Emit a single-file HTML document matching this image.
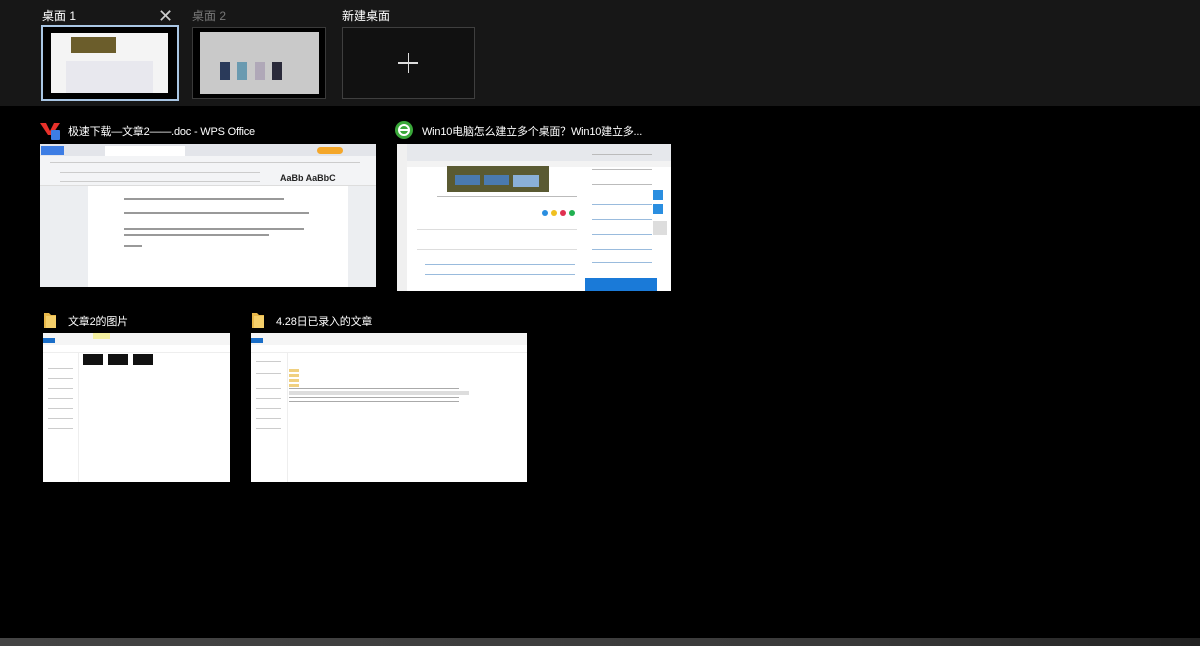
<!DOCTYPE html>
<html><head><meta charset="utf-8"><style>
*{margin:0;padding:0;box-sizing:border-box}
body{width:1200px;height:646px;background:#000;position:relative;overflow:hidden;font-family:"Liberation Sans","Noto Sans CJK SC",sans-serif;color:#fff}
.top{position:absolute;left:0;top:0;width:1200px;height:106px;background:#171717}
.abs{position:absolute}
.lbl{font-size:12px;position:absolute}
.t{font-size:11px;position:absolute;white-space:nowrap;letter-spacing:-0.2px}
.line{position:absolute;height:2px;background:#bbb}
.g{position:absolute;height:1px;background:#bbb}
</style></head><body>
<div class="top"></div>
<div class="lbl" style="left:42px;top:7px">桌面 1</div>
<div class="abs" style="left:158px;top:6px;font-size:18px;color:#ccc">✕</div>
<div class="lbl" style="left:192px;top:7px;color:#777">桌面 2</div>
<div class="lbl" style="left:342px;top:7px">新建桌面</div>
<div class="abs" style="left:41px;top:25px;width:138px;height:76px;border:2px solid #a9c6e4;background:#000">
 <div class="abs" style="left:8px;top:6px;width:117px;height:60px;background:#f4f4f4">
  <div class="abs" style="left:20px;top:4px;width:45px;height:16px;background:#6b5d2b"></div>
  <div class="abs" style="left:15px;top:28px;width:87px;height:32px;background:#e8e8ee"></div>
 </div></div>
<div class="abs" style="left:192px;top:27px;width:134px;height:72px;border:1px solid #3a3a3a;background:#000">
 <div class="abs" style="left:7px;top:4px;width:119px;height:62px;background:#c9c9c9">
  <div class="abs" style="left:20px;top:30px;width:10px;height:18px;background:#2a3a5a"></div>
  <div class="abs" style="left:37px;top:30px;width:10px;height:18px;background:#6a9ab0"></div>
  <div class="abs" style="left:55px;top:30px;width:10px;height:18px;background:#b0a8b8"></div>
  <div class="abs" style="left:72px;top:30px;width:10px;height:18px;background:#2a2a3a"></div>
 </div></div>
<div class="abs" style="left:342px;top:27px;width:133px;height:72px;border:1px solid #3f3f3f;background:#111"></div>
<div class="abs" style="left:398px;top:62px;width:20px;height:1.5px;background:#ddd"></div>
<div class="abs" style="left:407.5px;top:53px;width:1.5px;height:20px;background:#ddd"></div>

<!-- WPS -->
<svg class="abs" style="left:39px;top:121px" width="22" height="20"><path d="M1 2h6l4 8 4-8h6l-8 12h-4z" fill="#e8312a"/><rect x="12" y="9" width="9" height="10" rx="1" fill="#3d7de4"/></svg>
<div class="t" style="left:68px;top:123px">极速下载—文章2——.doc - WPS Office</div>
<div class="abs" style="left:40px;top:144px;width:336px;height:143px;background:#fff">
 <div class="abs" style="left:0;top:0;width:336px;height:12px;background:#e3e5ea"></div>
 <div class="abs" style="left:1px;top:2px;width:23px;height:9px;background:#3d7de4"></div>
 <div class="abs" style="left:65px;top:2px;width:80px;height:10px;background:#fff"></div>
 <div class="abs" style="left:277px;top:3px;width:26px;height:7px;border-radius:4px;background:#f4a72a"></div>
 <div class="abs" style="left:0;top:12px;width:336px;height:30px;background:#f3f4f6;border-bottom:1px solid #ddd"></div>
 <div class="g" style="left:10px;top:18px;width:310px;background:#ccc"></div>
 <div class="g" style="left:20px;top:28px;width:200px;background:#ccc"></div>
 <div class="g" style="left:20px;top:37px;width:200px;background:#ccc"></div>
 <div class="abs" style="left:240px;top:30px;width:90px;height:9px;font-size:9px;font-weight:bold;color:#222;line-height:9px">AaBb AaBbC</div>
 <div class="abs" style="left:0;top:42px;width:336px;height:101px;background:#eceef1"></div>
 <div class="abs" style="left:48px;top:42px;width:260px;height:101px;background:#fff"></div>
 <div class="line" style="left:84px;top:54px;width:160px;background:#999;height:1.5px"></div>
 <div class="line" style="left:84px;top:68px;width:185px;background:#999;height:1.5px"></div>
 <div class="line" style="left:84px;top:84px;width:180px;background:#999;height:1.5px"></div>
 <div class="line" style="left:84px;top:90px;width:145px;background:#999;height:1.5px"></div>
 <div class="line" style="left:84px;top:101px;width:18px;background:#999;height:1.5px"></div>
</div>

<!-- browser -->
<svg class="abs" style="left:394px;top:120px" width="20" height="20"><circle cx="10" cy="10" r="9" fill="#3aa83a"/><circle cx="10" cy="10" r="5" fill="none" stroke="#fff" stroke-width="2"/><rect x="6" y="9" width="8" height="2" fill="#fff"/></svg>
<div class="t" style="left:422px;top:123px">Win10电脑怎么建立多个桌面？Win10建立多...</div>
<div class="abs" style="left:397px;top:144px;width:274px;height:147px;background:#fff">
 <div class="abs" style="left:0;top:0;width:274px;height:17px;background:#e6e8ec"></div>
 <div class="abs" style="left:0;top:17px;width:274px;height:6px;background:#f3f3f3"></div>
 <div class="abs" style="left:0;top:0;width:10px;height:147px;background:#f0f0f0"></div>
 <div class="abs" style="left:50px;top:22px;width:102px;height:26px;background:#5a5a32"></div>
 <div class="abs" style="left:58px;top:31px;width:25px;height:10px;background:#4a7ab0"></div>
 <div class="abs" style="left:87px;top:31px;width:25px;height:10px;background:#4a7ab0"></div>
 <div class="abs" style="left:116px;top:31px;width:26px;height:12px;background:#8ab0d8"></div>
 <div class="g" style="left:40px;top:52px;width:140px"></div>
 <div class="g" style="left:20px;top:85px;width:160px;background:#ddd"></div>
 <div class="g" style="left:20px;top:105px;width:160px;background:#ddd"></div>
 <div class="g" style="left:28px;top:120px;width:150px;background:#9bd"></div>
 <div class="g" style="left:28px;top:130px;width:150px;background:#9bd"></div>
 <div class="g" style="left:195px;top:10px;width:60px"></div>
 <div class="g" style="left:195px;top:25px;width:60px"></div>
 <div class="g" style="left:195px;top:40px;width:60px"></div>
 <div class="g" style="left:195px;top:60px;width:60px;background:#9bd"></div>
 <div class="g" style="left:195px;top:75px;width:60px;background:#9bd"></div>
 <div class="g" style="left:195px;top:90px;width:60px;background:#9bd"></div>
 <div class="g" style="left:195px;top:105px;width:60px;background:#9bd"></div>
 <div class="g" style="left:195px;top:118px;width:60px;background:#9bd"></div>
 <div class="abs" style="left:145px;top:66px;width:6px;height:6px;border-radius:50%;background:#2a8ee0"></div>
 <div class="abs" style="left:154px;top:66px;width:6px;height:6px;border-radius:50%;background:#f0c020"></div>
 <div class="abs" style="left:163px;top:66px;width:6px;height:6px;border-radius:50%;background:#e03050"></div>
 <div class="abs" style="left:172px;top:66px;width:6px;height:6px;border-radius:50%;background:#20b050"></div>
 <div class="abs" style="left:188px;top:134px;width:72px;height:13px;background:#1a7ad8"></div>
 <div class="abs" style="left:256px;top:46px;width:10px;height:10px;background:#2a8ee0"></div>
 <div class="abs" style="left:256px;top:60px;width:10px;height:10px;background:#2a8ee0"></div>
 <div class="abs" style="left:256px;top:77px;width:14px;height:14px;background:#ddd"></div>
</div>

<!-- folders -->
<svg class="abs" style="left:43px;top:311px" width="14" height="18"><path d="M1 2h5l2 2h5v13H1z" fill="#e8b84a"/><rect x="3" y="5" width="10" height="12" fill="#f5cf6a"/></svg>
<div class="t" style="left:68px;top:313px">文章2的图片</div>
<div class="abs" style="left:43px;top:333px;width:187px;height:149px;background:#fff">
 <div class="abs" style="left:0;top:0;width:187px;height:12px;background:#f5f5f5"></div>
 <div class="abs" style="left:0;top:5px;width:12px;height:5px;background:#1a6ec8"></div>
 <div class="abs" style="left:50px;top:0;width:17px;height:6px;background:#f4f0a0"></div>
 <div class="abs" style="left:0;top:13px;width:187px;height:7px;border-bottom:1px solid #eee"></div>
 <div class="abs" style="left:35px;top:20px;width:1px;height:129px;background:#eee"></div>
 <div class="g" style="left:5px;top:35px;width:25px;background:#ccc"></div>
 <div class="g" style="left:5px;top:45px;width:25px;background:#ccc"></div>
 <div class="g" style="left:5px;top:55px;width:25px;background:#ccc"></div>
 <div class="g" style="left:5px;top:65px;width:25px;background:#ccc"></div>
 <div class="g" style="left:5px;top:75px;width:25px;background:#ccc"></div>
 <div class="g" style="left:5px;top:85px;width:25px;background:#ccc"></div>
 <div class="g" style="left:5px;top:95px;width:25px;background:#ccc"></div>
 <div class="abs" style="left:40px;top:21px;width:20px;height:11px;background:#111"></div>
 <div class="abs" style="left:65px;top:21px;width:20px;height:11px;background:#111"></div>
 <div class="abs" style="left:90px;top:21px;width:20px;height:11px;background:#111"></div>
</div>
<svg class="abs" style="left:251px;top:311px" width="14" height="18"><path d="M1 2h5l2 2h5v13H1z" fill="#e8b84a"/><rect x="3" y="5" width="10" height="12" fill="#f5cf6a"/></svg>
<div class="t" style="left:276px;top:313px">4.28日已录入的文章</div>
<div class="abs" style="left:251px;top:333px;width:276px;height:149px;background:#fff">
 <div class="abs" style="left:0;top:0;width:276px;height:12px;background:#f5f5f5"></div>
 <div class="abs" style="left:0;top:5px;width:12px;height:5px;background:#1a6ec8"></div>
 <div class="abs" style="left:0;top:13px;width:276px;height:7px;border-bottom:1px solid #eee"></div>
 <div class="abs" style="left:36px;top:20px;width:1px;height:129px;background:#eee"></div>
 <div class="g" style="left:5px;top:28px;width:25px;background:#ccc"></div>
 <div class="g" style="left:5px;top:40px;width:25px;background:#ccc"></div>
 <div class="g" style="left:5px;top:55px;width:25px;background:#ccc"></div>
 <div class="g" style="left:5px;top:65px;width:25px;background:#ccc"></div>
 <div class="g" style="left:5px;top:75px;width:25px;background:#ccc"></div>
 <div class="g" style="left:5px;top:85px;width:25px;background:#ccc"></div>
 <div class="g" style="left:5px;top:95px;width:25px;background:#ccc"></div>
 <div class="abs" style="left:38px;top:36px;width:10px;height:3px;background:#f0d080"></div>
 <div class="abs" style="left:38px;top:41px;width:10px;height:3px;background:#f0d080"></div>
 <div class="abs" style="left:38px;top:46px;width:10px;height:3px;background:#f0d080"></div>
 <div class="abs" style="left:38px;top:51px;width:10px;height:3px;background:#f0d080"></div>
 <div class="abs" style="left:38px;top:55px;width:170px;height:1px;background:#aaa"></div>
 <div class="abs" style="left:38px;top:58px;width:180px;height:4px;background:#ddd"></div>
 <div class="abs" style="left:38px;top:64px;width:170px;height:1px;background:#aaa"></div>
 <div class="abs" style="left:38px;top:68px;width:170px;height:1px;background:#aaa"></div>
</div>

<div class="abs" style="left:0;top:638px;width:1200px;height:8px;background:linear-gradient(90deg,#444,#3a3a3a 70%,#222)"></div>
</body></html>
